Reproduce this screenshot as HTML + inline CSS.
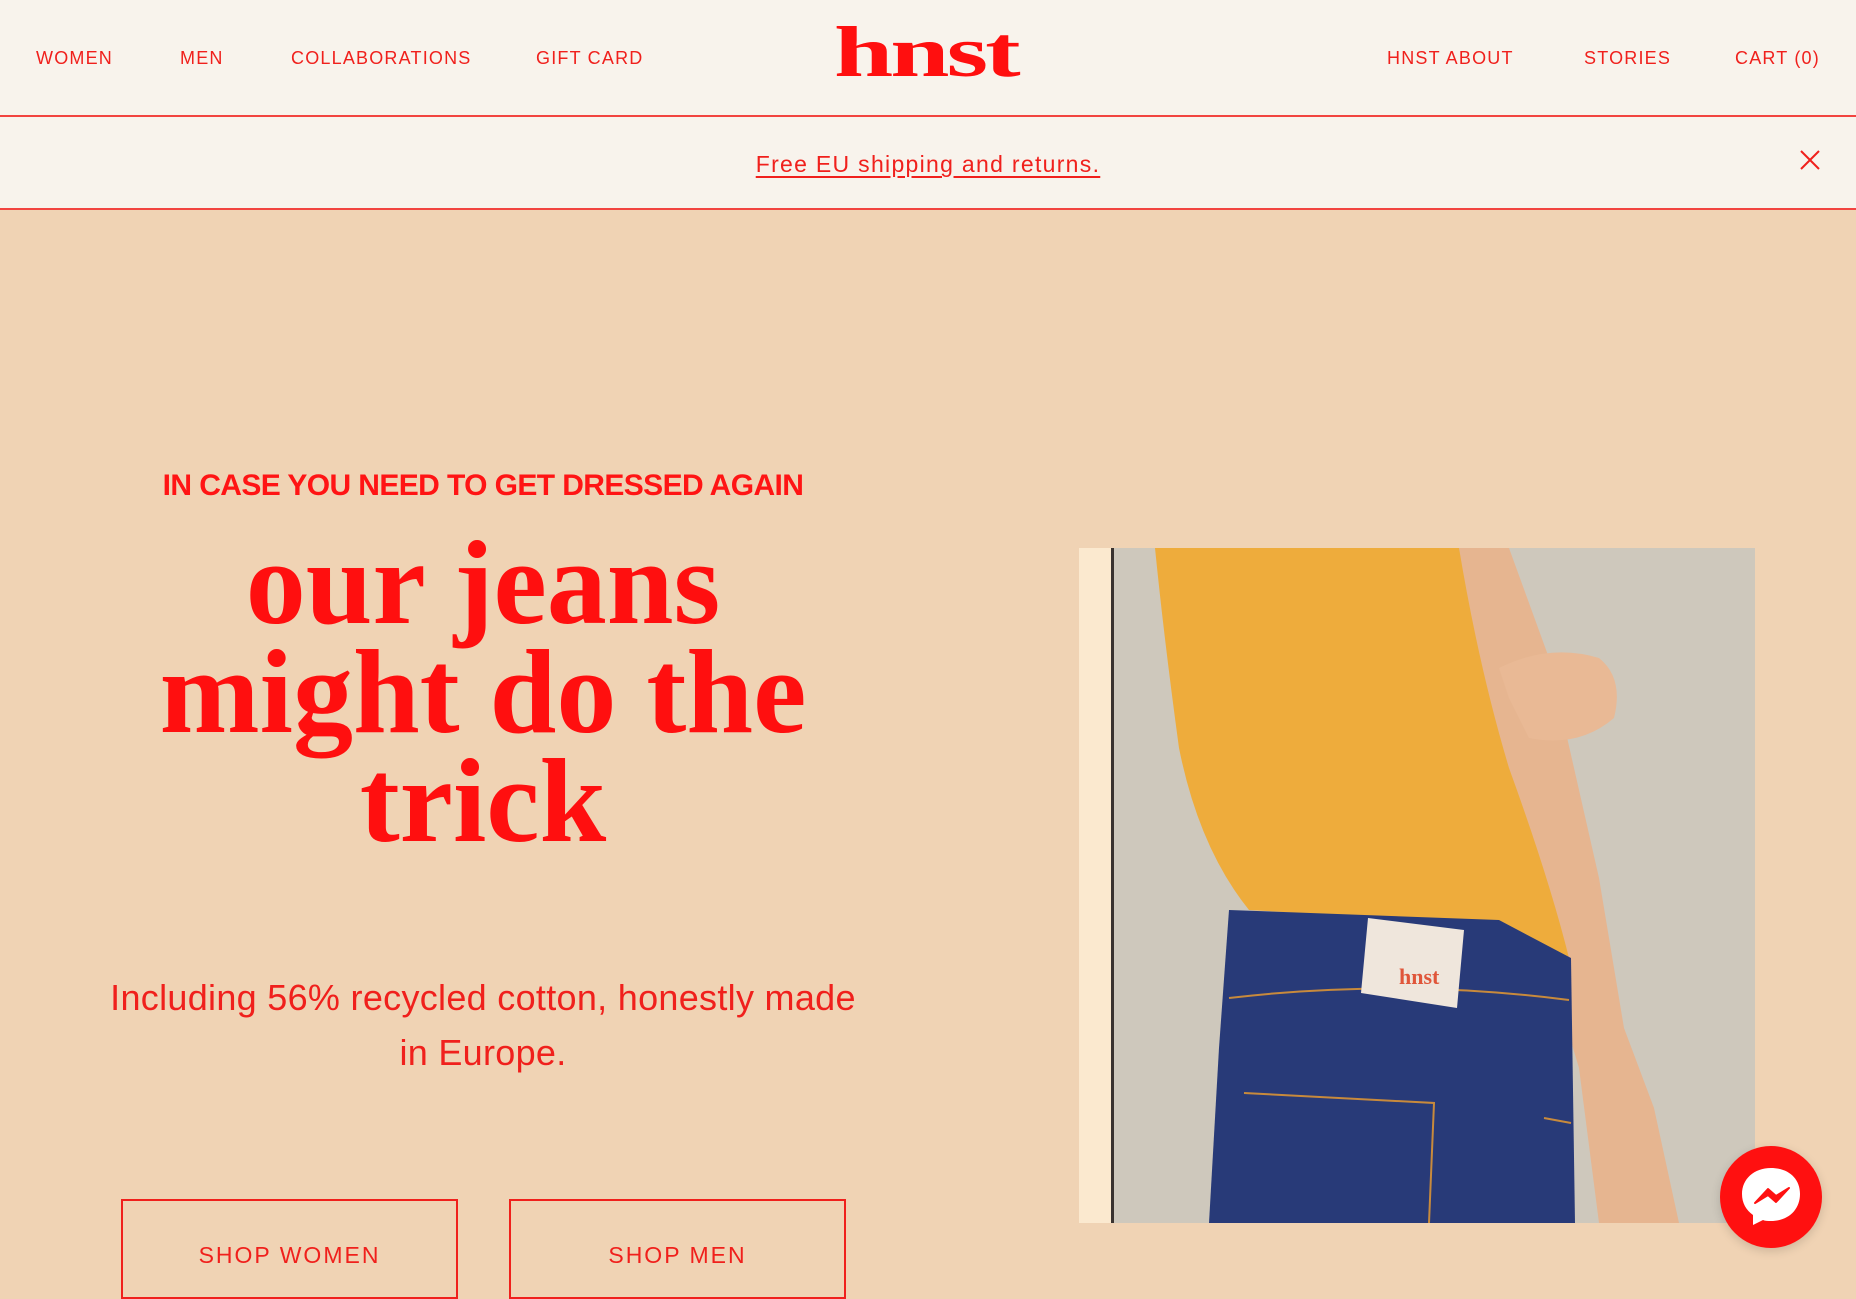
<!DOCTYPE html>
<html><head><meta charset="utf-8"><style>
*{margin:0;padding:0;box-sizing:border-box}
body{width:1856px;height:1281px;overflow:hidden;background:#f0d3b4;font-family:"Liberation Sans",sans-serif;color:#ff1414;position:relative}
.hdr{position:absolute;left:0;top:0;width:1856px;height:117px;background:#f8f3ec;border-bottom:2px solid #f2443f}
.nav{position:absolute;top:48px;font-size:18px;letter-spacing:1.2px;color:#f0201c}
.logo{position:absolute;left:834px;top:16px;font-family:"Liberation Serif",serif;font-weight:bold;font-size:72px;line-height:1;color:#ff0f0f;transform:scaleX(1.48);transform-origin:left top;letter-spacing:-2px}
.ban{position:absolute;left:0;top:117px;width:1856px;height:93px;background:#f8f3ec;border-bottom:2px solid #f2443f}
.ban a{position:absolute;left:0;width:1856px;text-align:center;top:34px;font-size:23px;letter-spacing:1.3px;color:#f0201c;text-decoration:underline;text-underline-offset:4px}
.kick{position:absolute;left:0;width:966px;text-align:center;top:469px;font-size:30px;font-weight:bold;letter-spacing:-0.6px;color:#ff1414}
.big{position:absolute;left:0;width:966px;text-align:center;top:528px;font-family:"Liberation Serif",serif;font-weight:bold;font-size:120px;line-height:109px;color:#ff0f0f}
.sub{position:absolute;left:0;width:966px;text-align:center;top:970px;font-size:36px;line-height:55px;color:#f0201c;letter-spacing:0.3px}
.btn{position:absolute;top:1199px;width:337px;height:100px;border:2px solid #f0201c;text-align:center;padding-top:41px;font-size:23px;letter-spacing:2px;color:#f0201c}
.msg{position:absolute;left:1720px;top:1146px;width:102px;height:102px;border-radius:50%;background:#ff1010;box-shadow:0 3px 10px rgba(0,0,0,.15)}
</style></head><body>
<div class="hdr">
<div class="nav" style="left:36px">WOMEN</div>
<div class="nav" style="left:180px">MEN</div>
<div class="nav" style="left:291px">COLLABORATIONS</div>
<div class="nav" style="left:536px">GIFT CARD</div>
<div class="logo">hnst</div>
<div class="nav" style="left:1387px">HNST ABOUT</div>
<div class="nav" style="left:1584px">STORIES</div>
<div class="nav" style="left:1735px">CART (0)</div>
</div>
<div class="ban"><a>Free EU shipping and returns.</a>
<svg style="position:absolute;left:1799px;top:32px" width="22" height="22" viewBox="0 0 22 22"><path d="M2 2L20 20M20 2L2 20" stroke="#f0201c" stroke-width="2"/></svg></div>
<div class="kick">IN CASE YOU NEED TO GET DRESSED AGAIN</div>
<div class="big">our jeans<br>might do the<br>trick</div>
<div class="sub">Including 56% recycled cotton, honestly made<br>in Europe.</div>
<div class="btn" style="left:121px">SHOP WOMEN</div>
<div class="btn" style="left:509px">SHOP MEN</div>
<svg style="position:absolute;left:1079px;top:548px" width="676" height="675" viewBox="0 0 676 675">
<rect width="676" height="675" fill="#cec8bc"/>
<rect width="33" height="675" fill="#fbe9cf"/>
<rect x="32" width="3" height="675" fill="#3a3330"/>
<path d="M380 0 L430 0 L470 110 L520 330 L545 480 L575 560 L600 675 L520 675 L500 520 L470 420 L430 260 L395 120Z" fill="#e6b590"/>
<path d="M420 120 Q470 95 520 110 Q545 130 535 170 Q500 200 450 190 L430 150Z" fill="#e9b995"/>
<path d="M76 0 L380 0 Q400 120 430 220 Q470 330 490 410 L420 400 L340 372 L170 362 Q120 300 100 200 Q85 90 76 0Z" fill="#eeac3c"/>
<path d="M150 362 L420 372 L492 410 L496 675 L130 675 L140 500Z" fill="#283a78"/>
<path d="M150 450 Q320 430 490 452" stroke="#c88a3c" stroke-width="2" fill="none"/>
<path d="M165 545 L355 555 L350 675 M465 570 L492 575" stroke="#c88a3c" stroke-width="2" fill="none"/>
<path d="M289 370 L385 382 L378 460 L282 445Z" fill="#efe6dc"/>
<text x="320" y="436" font-family="Liberation Serif,serif" font-weight="bold" font-size="22" fill="#e0563a">hnst</text>
</svg>
<div class="msg"><svg width="102" height="102" viewBox="0 0 102 102"><path d="M51 22C34 22 22 33 22 48c0 9 4 16 11 21v10l10-5c2 1 5 1 8 1 17 0 29-11 29-27S68 22 51 22Z" fill="#fff"/><path d="M35 57l13-14 8 7 13-8-13 14-8-7z" fill="#ff1010" stroke="#ff1010" stroke-width="2" stroke-linejoin="round"/></svg></div>
</body></html>
